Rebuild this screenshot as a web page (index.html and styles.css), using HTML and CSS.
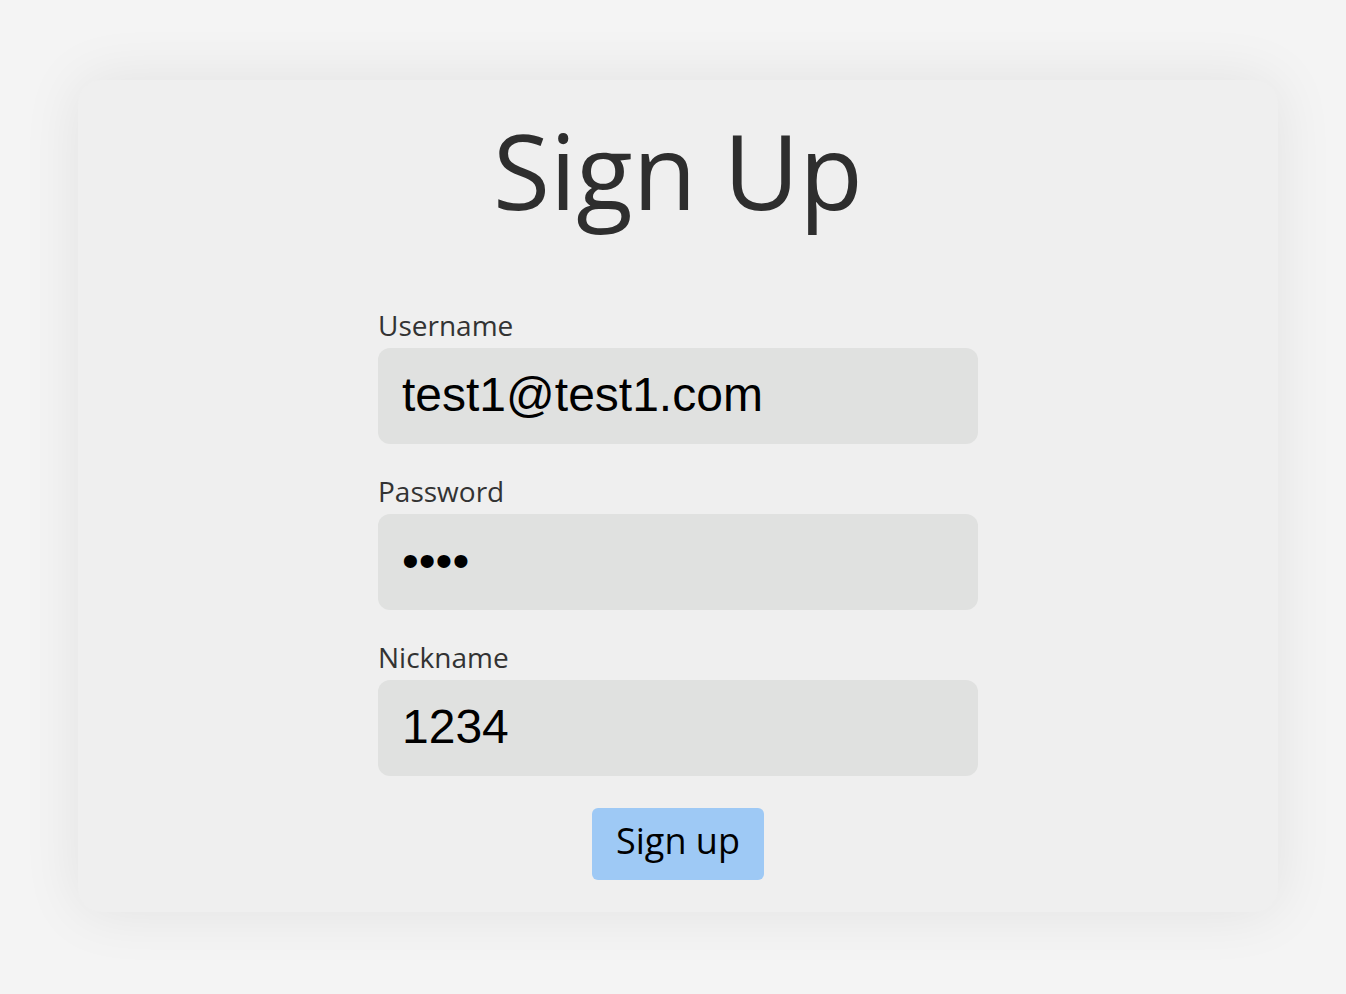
FILE: index.html
```html
<!DOCTYPE html>
<html>
<head>
<meta charset="utf-8">
<link rel="stylesheet" href="styles.css">
</head>
<body>
<main class="card">
  <h1 class="title">Sign Up</h1>
  <form class="form">
    <label class="field">
      <span class="label">Username</span>
      <input class="input" type="text" value="test1@test1.com">
    </label>
    <label class="field">
      <span class="label">Password</span>
      <input class="input" type="password" value="1234">
    </label>
    <label class="field">
      <span class="label">Nickname</span>
      <input class="input" type="text" value="1234">
    </label>
    <button class="btn" type="button">Sign up</button>
  </form>
</main>
</body>
</html>
```
FILE: styles.css
```css
html, body {
  margin: 0;
  padding: 0;
  background: #f4f4f4;
}
body {
  padding: 80px 68px 82px 78px;
  font-family: "Open Sans", "Noto Sans CJK KR", sans-serif;
}
.card {
  width: 1200px;
  height: 832px;
  box-sizing: border-box;
  background: #efefef;
  border-radius: 24px;
  box-shadow: 0 0 60px rgba(0, 0, 0, 0.08);
  display: flex;
  flex-direction: column;
  align-items: center;
  padding-top: 15px;
}
.title {
  margin: 0;
  font-weight: 400;
  font-size: 104px;
  line-height: 150px;
  color: #2e2e2e;
}
.form {
  margin-top: 65px;
  width: 600px;
  display: flex;
  flex-direction: column;
  align-items: center;
}
.field {
  width: 100%;
  display: flex;
  flex-direction: column;
  margin-bottom: 32px;
}
.label {
  font-size: 28px;
  line-height: 30px;
  padding-bottom: 8px;
  color: #333;
}
.input {
  box-sizing: border-box;
  width: 600px;
  height: 96px;
  border: none;
  border-radius: 12px;
  background: #e0e1e0;
  padding: 0 24px 4px;
  font-family: "Liberation Sans", Arial, sans-serif;
  font-size: 48px;
  color: #000;
  outline: none;
}
.btn {
  width: 172px;
  height: 72px;
  border: none;
  border-radius: 6px;
  background: #9ec9f5;
  font-family: "Open Sans", "Noto Sans CJK KR", sans-serif;
  font-size: 36px;
  line-height: 1;
  padding: 0 0 6px;
  color: #000;
}
```
